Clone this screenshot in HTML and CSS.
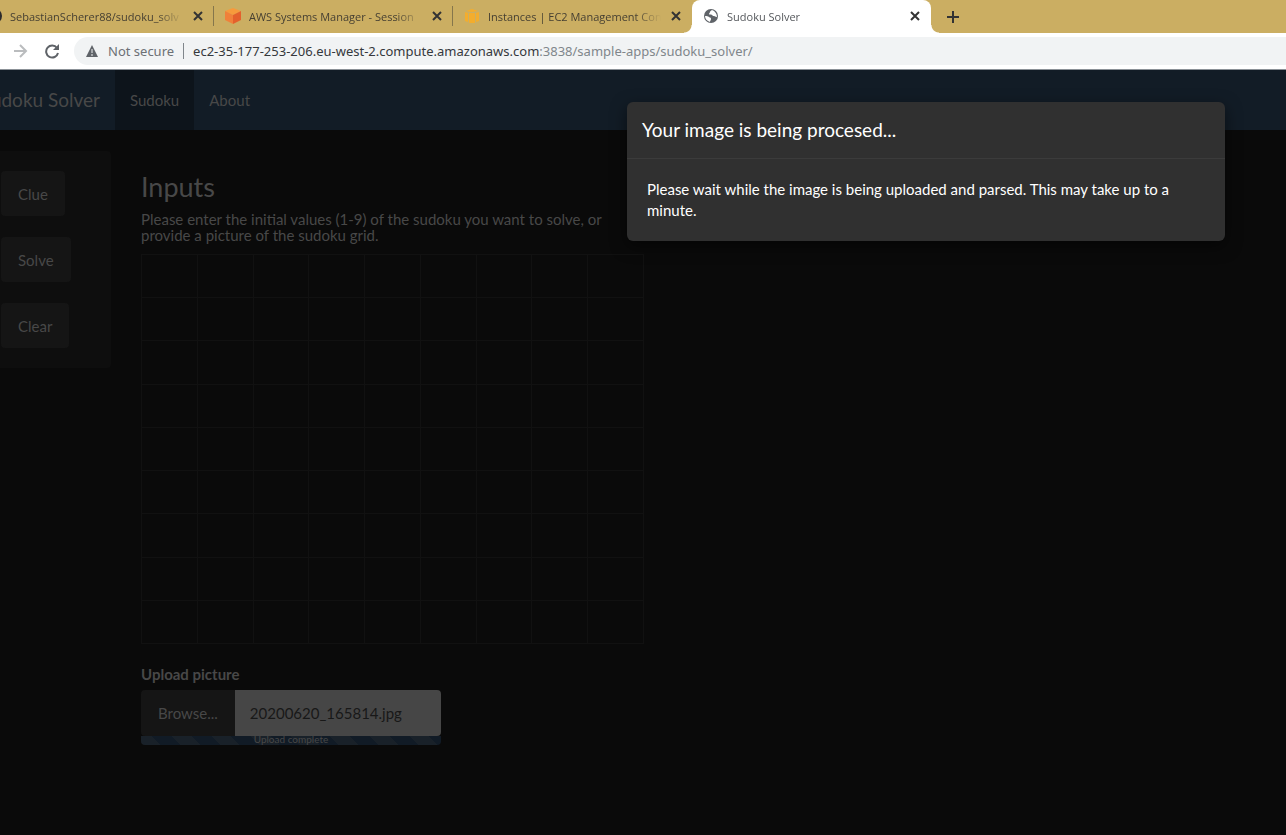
FILE: index.html
```html
<!DOCTYPE html>
<html lang="en">
<head>
<meta charset="utf-8">
<title>Sudoku Solver</title>
<link rel="stylesheet" href="styles.css">
</head>
<body>
<header class="browser">
  <div class="tabs">
    <div class="tab tab-clipped">
      <svg class="tab-icon" viewBox="0 0 18 18"><circle cx="9" cy="9" r="8" fill="#2b2a2c"/></svg>
      <span class="tab-label">SebastianScherer88/sudoku_solv</span>
      <button class="icon-button" aria-label="Close tab"><svg viewBox="0 0 12 12"><path d="M2 2l8 8M10 2l-8 8"/></svg></button>
    </div>
    <div class="tab">
      <svg class="tab-icon" viewBox="0 0 18 18"><path d="M9 1l8 3-8 4-8-4z" fill="#f79a3c"/><path d="M1 4l8 4v9l-8-4z" fill="#f0803a"/><path d="M17 4L9 8v9l8-4z" fill="#e4602c"/></svg>
      <span class="tab-label">AWS Systems Manager - Session</span>
      <button class="icon-button" aria-label="Close tab"><svg viewBox="0 0 12 12"><path d="M2 2l8 8M10 2l-8 8"/></svg></button>
    </div>
    <div class="tab tab-last">
      <svg class="tab-icon" viewBox="0 0 18 18"><path d="M3 4l6-2 6 2-6 1zM2 5l3 1v9l-3-1zM6 6h6v10H6zM13 6l3-1v9l-3 1z" fill="#f3ad2d"/></svg>
      <span class="tab-label">Instances | EC2 Management Con</span>
      <button class="icon-button" aria-label="Close tab"><svg viewBox="0 0 12 12"><path d="M2 2l8 8M10 2l-8 8"/></svg></button>
    </div>
    <div class="tab tab-active">
      <svg class="tab-icon" viewBox="0 0 18 18"><circle cx="9" cy="9" r="7" fill="#5f6368"/><path d="M10 3c-1 1-2 1-2 2s-1 1-1 2 2 0 3 1 1 1 2 1 1 1 3 1c0-3-2-6-5-7zM3 9c2 0 3 0 4 1s2 0 2 2-1 1-1 3c-3-1-5-3-5-6z" fill="#fff"/></svg>
      <span class="tab-label">Sudoku Solver</span>
      <button class="icon-button" aria-label="Close tab"><svg viewBox="0 0 12 12"><path d="M2 2l8 8M10 2l-8 8"/></svg></button>
    </div>
    <button class="icon-button new-tab" aria-label="New tab"><svg viewBox="0 0 12 12"><path d="M6 0v12M0 6h12"/></svg></button>
  </div>
  <div class="toolbar">
    <button class="tool" aria-label="Forward"><svg viewBox="0 0 16 16"><path d="M2 8h12M8 2l6 6-6 6" fill="none" stroke="#babcbe" stroke-width="2"/></svg></button>
    <button class="tool" aria-label="Reload"><svg viewBox="0 0 16 16"><path d="M13 5a6 6 0 1 0 1 5" fill="none" stroke="#5f6368" stroke-width="2"/><path d="M15 1v6H9z" fill="#5f6368"/></svg></button>
    <div class="address">
      <svg class="warning" viewBox="0 0 14 14"><path d="M7 1l6 12H1z" fill="#5f6368"/><path d="M7 5v4M7 10v2" stroke="#f1f3f4" stroke-width="1"/></svg>
      <span class="security">Not secure</span>
      <span class="url"><span class="host">ec2-35-177-253-206.eu-west-2.compute.amazonaws.com</span>:3838/sample-apps/sudoku_solver/</span>
    </div>
  </div>
</header>
<div class="page">
  <nav class="navbar">
    <a class="brand" href="#">Sudoku Solver</a>
    <a class="nav-link nav-active" href="#">Sudoku</a>
    <a class="nav-link" href="#">About</a>
  </nav>
  <main class="content">
    <aside class="sidebar">
      <button class="btn">Clue</button>
      <button class="btn">Solve</button>
      <button class="btn">Clear</button>
    </aside>
    <section class="inputs">
      <h1 class="heading">Inputs</h1>
      <p class="hint">Please enter the initial values (1-9) of the sudoku you want to solve, or provide a picture of the sudoku grid.</p>
      <table class="grid" aria-label="Sudoku grid">
        <tr><td></td><td></td><td></td><td></td><td></td><td></td><td></td><td></td><td></td></tr>
        <tr><td></td><td></td><td></td><td></td><td></td><td></td><td></td><td></td><td></td></tr>
        <tr><td></td><td></td><td></td><td></td><td></td><td></td><td></td><td></td><td></td></tr>
        <tr><td></td><td></td><td></td><td></td><td></td><td></td><td></td><td></td><td></td></tr>
        <tr><td></td><td></td><td></td><td></td><td></td><td></td><td></td><td></td><td></td></tr>
        <tr><td></td><td></td><td></td><td></td><td></td><td></td><td></td><td></td><td></td></tr>
        <tr><td></td><td></td><td></td><td></td><td></td><td></td><td></td><td></td><td></td></tr>
        <tr><td></td><td></td><td></td><td></td><td></td><td></td><td></td><td></td><td></td></tr>
        <tr><td></td><td></td><td></td><td></td><td></td><td></td><td></td><td></td><td></td></tr>
      </table>
      <label class="upload-label" for="picture">Upload picture</label>
      <div class="upload">
        <button class="btn browse">Browse...</button>
        <input class="file-name" id="picture" type="text" value="20200620_165814.jpg" readonly>
      </div>
      <div class="progress">Upload complete</div>
    </section>
  </main>
  <div class="modal" role="dialog" aria-labelledby="modal-title">
    <h2 class="modal-title" id="modal-title">Your image is being procesed...</h2>
    <p class="modal-body">Please wait while the image is being uploaded and parsed. This may take up to a minute.</p>
  </div>
</div>
</body>
</html>
```
FILE: styles.css
```css
* { box-sizing: border-box; }
body {
  margin: 0;
  min-height: 100vh;
  display: flex;
  flex-direction: column;
  background: #0a0a0a;
  font-family: Lato, sans-serif;
  font-size: 15px;
  color: #484848;
}
button { border: 0; padding: 0; background: none; font: inherit; color: inherit; }
a { color: inherit; text-decoration: none; }

.browser { font-family: "Noto Sans", "Open Sans", sans-serif; }
.tabs { display: flex; height: 33px; background: #cbae62; }
.tab {
  display: flex;
  align-items: center;
  flex: 0 0 239px;
  min-width: 0;
  padding: 0 10px 1px;
  position: relative;
  font-family: "Open Sans", "Noto Sans", sans-serif;
  font-size: 11px;
  color: #453f32;
}
.tab::after {
  content: "";
  position: absolute;
  right: 0;
  top: 6px;
  width: 1px;
  height: 20px;
  background: #85764c;
}
.tab-clipped { flex-basis: 214px; justify-content: flex-end; overflow: hidden; }
.tab-clipped .tab-label { flex: 0 0 173px; }
.tab-last::after { display: none; }
.tab-active { background: #fff; color: #55585c; border-radius: 8px 8px 0 0; }
.tab-active::before,
.tab-active::after {
  content: "";
  position: absolute;
  top: auto;
  bottom: 0;
  width: 8px;
  height: 8px;
}
.tab-active::before { left: -8px; background: radial-gradient(circle at 0 0, transparent 7px, #fff 8px); }
.tab-active::after { right: -8px; background: radial-gradient(circle at 100% 0, transparent 7px, #fff 8px); }
.tab-icon { flex: 0 0 18px; height: 18px; margin-right: 7px; }
.tab-label {
  flex: 1 1 0;
  min-width: 0;
  overflow: hidden;
  white-space: nowrap;
  margin-right: 9px;
  mask-image: linear-gradient(to right, #000 85%, transparent);
}
.icon-button { display: flex; flex: 0 0 12px; stroke: #333; stroke-width: 2; }
.icon-button svg { width: 12px; height: 12px; fill: none; }
.new-tab { align-items: center; margin-left: 16px; }

.toolbar {
  display: flex;
  align-items: center;
  gap: 16px;
  height: 37px;
  padding-left: 12px;
  background: #fff;
  border-bottom: 1px solid #8b9197;
}
.tool { display: flex; flex: 0 0 16px; }
.tool svg { width: 16px; height: 16px; }
.address {
  display: flex;
  align-items: center;
  flex: 1;
  height: 28px;
  margin-left: -2px;
  padding-left: 11px;
  border-radius: 14px 0 0 14px;
  background: #f1f3f4;
  font-size: 13px;
  color: #80868b;
  white-space: nowrap;
}
.warning { width: 14px; height: 14px; margin-right: 9px; }
.security { line-height: 16px; padding-right: 9px; border-right: 1px solid #80868b; color: #6c7075; }
.url { padding-left: 9px; }
.host { color: #35383c; }

.page { flex: 1; position: relative; overflow: hidden; }
.navbar { display: flex; height: 60px; background: #121c26; }
.brand, .nav-link { display: flex; align-items: center; padding: 0 15px 1px; }
.brand {
  width: 115px;
  padding-left: 0;
  justify-content: flex-end;
  overflow: hidden;
  font-size: 19px;
  white-space: nowrap;
}
.nav-active { background: #0d141b; }

.content { display: flex; align-items: flex-start; gap: 30px; padding-top: 21px; }
.sidebar {
  display: flex;
  flex-direction: column;
  align-items: flex-start;
  gap: 21px;
  width: 111px;
  padding: 20px 1px;
  border-radius: 0 4px 4px 0;
  background: #0e0e0e;
}
.btn { height: 45px; padding: 0 17px; border-radius: 4px; background: #151515; }
.inputs { flex: 0 1 503px; padding-top: 20px; }
.heading { margin: 0; font-size: 27px; font-weight: 400; line-height: 32px; }
.hint { margin: 8px 0 11px; line-height: 16px; }
.grid { width: 100%; height: 390px; border-collapse: collapse; table-layout: fixed; }
.grid td { padding: 0; border: 1px solid #111; }
.upload-label { display: block; margin-top: 20px; font-weight: 700; line-height: 20px; }
.upload { display: flex; width: 300px; margin-top: 6px; }
.browse { height: 46px; border-radius: 4px 0 0 4px; }
.file-name {
  flex: 1;
  min-width: 0;
  padding: 0 15px;
  border: 0;
  border-radius: 0 4px 4px 0;
  background: #464646;
  color: #181818;
  font: inherit;
}
.progress {
  width: 300px;
  height: 9px;
  border-radius: 0 0 4px 4px;
  background: repeating-linear-gradient(45deg, #192129 0 14px, #111b26 14px 28px);
  font-size: 10px;
  line-height: 7px;
  text-align: center;
}

.modal {
  position: absolute;
  top: 32px;
  right: 61px;
  width: 598px;
  border-radius: 6px;
  background: #303030;
  box-shadow: 0 5px 16px rgba(0, 0, 0, 0.5);
  color: #fff;
}
.modal-title {
  margin: 0;
  padding: 15px 15px 16px;
  border-bottom: 1px solid #3b3b3b;
  font-size: 19px;
  font-weight: 400;
  line-height: 25px;
}
.modal-body { margin: 0; padding: 20px; line-height: 21px; }
```
